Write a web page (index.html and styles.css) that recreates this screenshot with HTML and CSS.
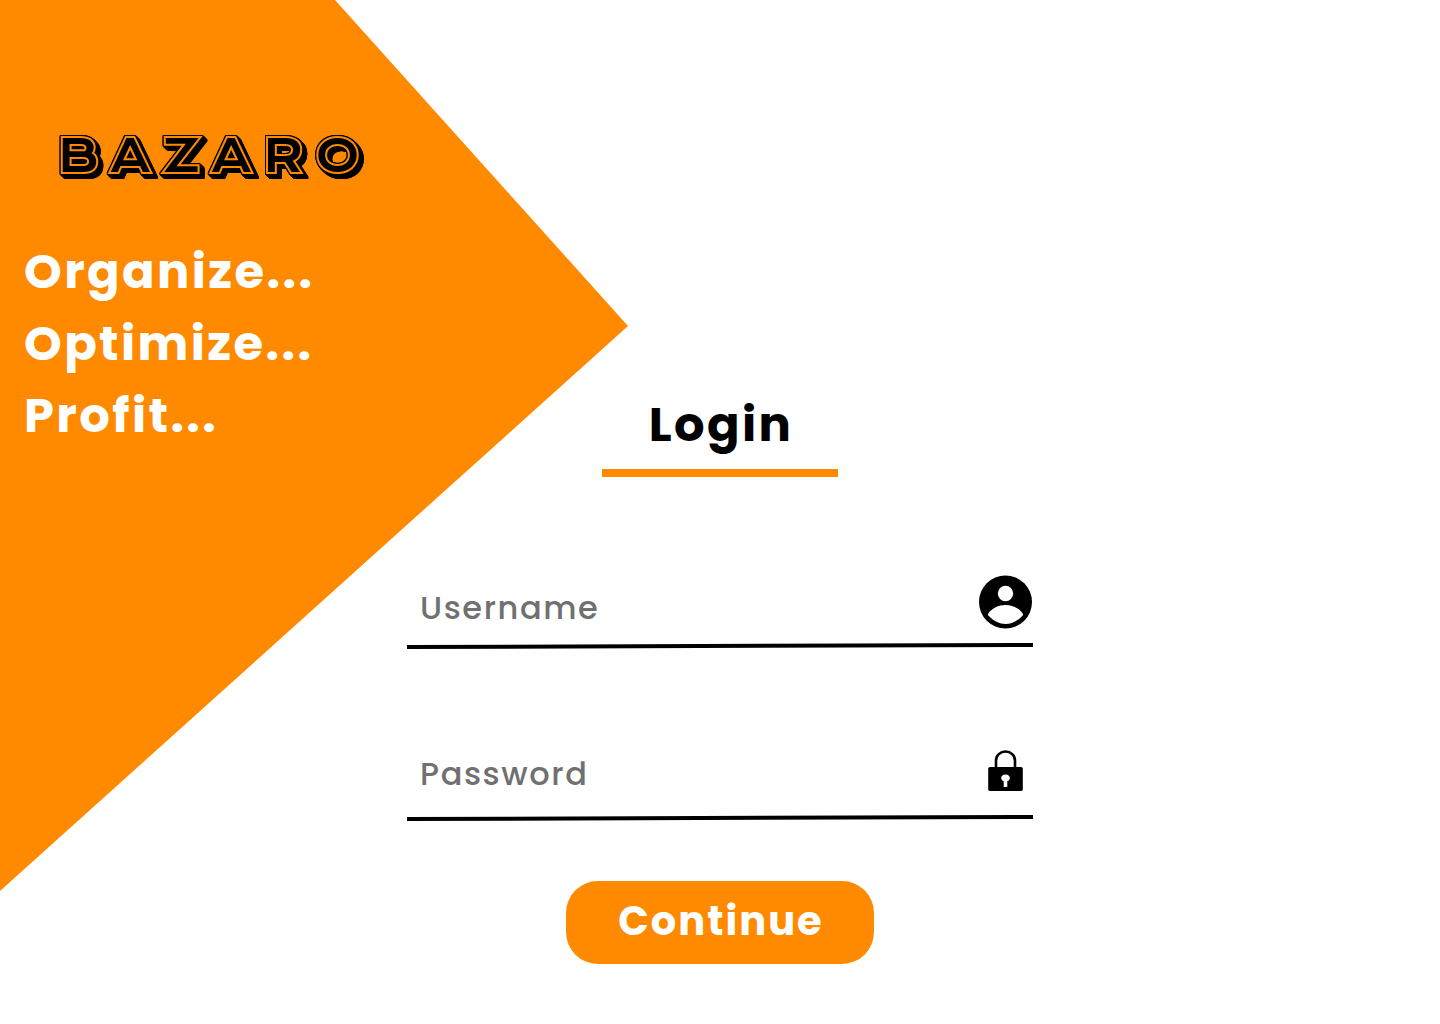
FILE: index.html
```html
<!DOCTYPE html>
<html lang="en">
<head>
  <meta charset="utf-8">
  <meta name="viewport" content="width=device-width, initial-scale=1">
  <title>Bazaro – Login</title>
  <link rel="stylesheet" href="styles.css">
</head>
<body>
  <div class="page">
    <aside class="brand">
      <div class="logo">BAZARO</div>
      <p class="tagline">Organize...<br>Optimize...<br>Profit...</p>
    </aside>

    <main class="login">
      <h1 class="title">Login</h1>
      <form class="form">
        <div class="field">
          <label class="row">
            <input class="input" name="username" type="text" placeholder="Username" aria-label="Username" autocomplete="username">
            <svg class="icon" width="54" height="54" viewBox="0 0 54 54" aria-hidden="true">
              <circle cx="26.500" cy="27" r="26.500"/>
              <circle cx="26.500" cy="18.500" r="7.700" fill="#fff"/>
              <path d="M9.300 38.500C13 33.200 19.500 30 26.500 30s13.500 3.200 17.200 8.500c.5.800.4 1.600-.2 2.300C38.500 46 32.500 49 26.500 49s-12-3-17-8.200c-.6-.7-.7-1.500-.2-2.300z" fill="#fff"/>
            </svg>
          </label>
          <svg class="rule" viewBox="0 0 626 6" preserveAspectRatio="none" aria-hidden="true">
            <path d="M0 4L626 2" stroke="#000" stroke-width="4"/>
          </svg>
        </div>

        <div class="field">
          <label class="row row-lock">
            <input class="input" name="password" type="password" placeholder="Password" aria-label="Password" autocomplete="current-password">
            <svg class="icon icon-lock" width="36" height="42" viewBox="0 0 36 42" aria-hidden="true">
              <path d="M9 18V10.500a9.500 9 0 0 1 19 0V18" fill="none" stroke="#000" stroke-width="2.600"/>
              <rect x="1.200" y="17" width="34.600" height="24" rx="1.800"/>
              <path d="M18.500 24.500c2.500 0 4.300 1.500 4.300 3.500 0 1.500-1 2.700-2.500 3.100v5.900h-3.600v-5.900c-1.500-.4-2.500-1.600-2.500-3.100 0-2 1.800-3.500 4.300-3.500z" fill="#fff"/>
            </svg>
          </label>
          <svg class="rule" viewBox="0 0 626 6" preserveAspectRatio="none" aria-hidden="true">
            <path d="M0 4L626 2" stroke="#000" stroke-width="4"/>
          </svg>
        </div>

        <button class="submit" type="submit">Continue</button>
      </form>
    </main>
  </div>
</body>
</html>
```
FILE: styles.css
```css
* {
  box-sizing: border-box;
}

body {
  margin: 0;
  background: #fff;
  color: #000;
  font-family: Poppins, Inter, sans-serif;
}

/* The brand wedge and the form share one grid cell, the form on top. */
.page {
  display: grid;
  grid-template-columns: minmax(0, 1fr);
  align-items: start;
  min-height: 100vh;
}

.brand,
.login {
  grid-area: 1 / 1;
}

.brand {
  width: 628px;
  max-width: 100%;
  min-height: 891px;
  padding: 124px 24px 0;
  background: #ff8a00;
  clip-path: polygon(0 0, 335px 0, 628px 326px, 0 891px);
}

/* Inline lettering: black core, orange band, thin outline, drop shade. */
.logo {
  padding-left: 34px;
  color: #000;
  font-family: "Krona One", "DejaVu Sans", sans-serif;
  font-size: 44px;
  font-weight: 400;
  line-height: 64px;
  letter-spacing: 12px;
  -webkit-text-stroke: 4px #ff8a00;
  paint-order: stroke fill;
  filter:
    drop-shadow(1px 0 0 #000) drop-shadow(-1px 0 0 #000)
    drop-shadow(0 1px 0 #000) drop-shadow(0 -1px 0 #000)
    drop-shadow(1px 1px 0 #000) drop-shadow(2px 2px 0 #000)
    drop-shadow(1px 1px 0 #000);
}

.tagline {
  margin: 48px 0 0;
  color: #fff;
  font-size: 48px;
  font-weight: 700;
  line-height: 72px;
  letter-spacing: 0.05em;
}

.login {
  display: flex;
  flex-direction: column;
  align-items: center;
  justify-self: center;
  width: 100%;
  max-width: 626px;
  padding: 389px 0 60px;
}

.title {
  width: 236px;
  margin: 0;
  padding: 0 0 8px 2px;
  border-bottom: 8px solid #ff8a00;
  font-size: 48px;
  font-weight: 700;
  line-height: 72px;
  letter-spacing: 0.05em;
  text-align: center;
}

.form {
  display: flex;
  flex-direction: column;
  width: 100%;
  gap: 92px;
  padding-top: 98px;
}

.field {
  display: flex;
  flex-direction: column;
}

.row {
  display: flex;
  align-items: flex-start;
}

.row-lock {
  padding-bottom: 6px;
}

.input {
  flex: 1;
  min-width: 0;
  height: 66px;
  margin-bottom: 2px;
  padding: 0 13px;
  border: 0;
  outline: 0;
  background: transparent;
  color: #000;
  font: 500 32px Poppins, Inter, sans-serif;
  letter-spacing: 0.05em;
}

.input::placeholder {
  color: #707070;
  opacity: 1;
}

.icon {
  flex: none;
}

.icon-lock {
  margin: 9px 10px 0 0;
}

.rule {
  display: block;
  width: 100%;
  height: 6px;
}

.submit {
  align-self: center;
  width: 308px;
  height: 83px;
  margin-top: -32px;
  padding: 0 0 4px 2px;
  border: 0;
  border-radius: 32px;
  background: #ff8a00;
  color: #fff;
  font: 700 40px Poppins, Inter, sans-serif;
  letter-spacing: 0.05em;
  cursor: pointer;
}
```
